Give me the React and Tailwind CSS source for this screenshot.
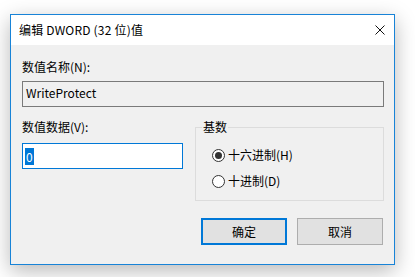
import { useState } from "react";

function Radio({ checked, label, onSelect }) {
  return (
    <label className="flex items-center h-[16px] cursor-default" onClick={onSelect}>
      <span className="w-[13px] h-[13px] rounded-full border border-[#333] bg-white flex items-center justify-center shrink-0">
        {checked && <span className="w-[7px] h-[7px] rounded-full bg-[#333]" />}
      </span>
      <span className="ml-[3px]">{label}</span>
    </label>
  );
}

function App() {
  const [radix, setRadix] = useState("hex");

  return (
    <div
      className="min-h-screen bg-white pl-[10px] pt-[14px] text-[12px] leading-[16px] text-black"
      style={{ fontFamily: '"Noto Sans CJK SC", "Noto Sans", sans-serif' }}
    >
      <div className="w-[385px] h-[251px] border border-[#1883d7] bg-[#f0f0f0] flex flex-col shadow-[0_6px_20px_rgba(0,0,0,0.28)]">
        {/* title bar */}
        <div className="h-[30px] bg-white flex items-center justify-between pl-[8px] pr-[9px] shrink-0">
          <span className="tracking-[0.2px]">编辑 DWORD (32 位)值</span>
          <svg width="10" height="10" viewBox="0 0 10 10" className="mt-[-1px]">
            <path d="M0.5 0.5 L9.5 9.5 M9.5 0.5 L0.5 9.5" stroke="#111" strokeWidth="1" fill="none" />
          </svg>
        </div>

        {/* body */}
        <div className="flex-1 pl-[11px] pr-[10px] pt-[14px]">
          <div>数值名称(N):</div>
          <div className="mt-[6px] h-[26px] border border-[#7a7a7a] bg-[#f0f0f0] flex items-center pl-[3px] pb-[2px]">
            WriteProtect
          </div>

          <div className="mt-[12px] flex">
            <div className="w-[161px]">
              <div>数值数据(V):</div>
              <div className="mt-[8px] h-[26px] border border-[#0078d7] bg-white flex items-center pl-[2px]">
                <span className="bg-[#0078d7] text-white px-[1px] leading-[17px]">0</span>
              </div>
            </div>

            <fieldset className="ml-[12px] w-[189px] h-[82px] border border-[#dcdcdc]">
              <legend className="ml-[6px] px-[1px] leading-[16px]">基数</legend>
              <div className="flex flex-col gap-[10px] pl-[16px] pt-[12px]">
                <Radio checked={radix === "hex"} label="十六进制(H)" onSelect={() => setRadix("hex")} />
                <Radio checked={radix === "dec"} label="十进制(D)" onSelect={() => setRadix("dec")} />
              </div>
            </fieldset>
          </div>

          <div className="mt-[17px] mr-[1px] flex justify-end gap-[10px]">
            <button className="w-[86px] h-[27px] border-2 border-[#0078d7] bg-[#e1e1e1]">确定</button>
            <button className="w-[86px] h-[27px] border border-[#adadad] bg-[#e1e1e1]">取消</button>
          </div>
        </div>
      </div>
    </div>
  );
}

export default App;
